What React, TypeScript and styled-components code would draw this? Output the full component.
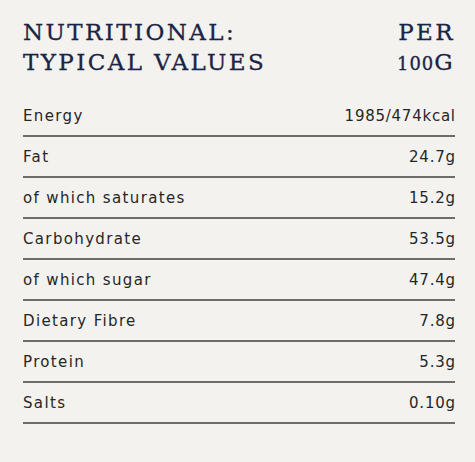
import React from 'react';
import styled, { createGlobalStyle } from 'styled-components';

const GlobalStyle = createGlobalStyle`
  html, body {
    margin: 0;
    padding: 0;
    background: #f4f2ee;
  }
`;

const rows: { label: string; value: string }[] = [
  { label: 'Energy', value: '1985/474kcal' },
  { label: 'Fat', value: '24.7g' },
  { label: 'of which saturates', value: '15.2g' },
  { label: 'Carbohydrate', value: '53.5g' },
  { label: 'of which sugar', value: '47.4g' },
  { label: 'Dietary Fibre', value: '7.8g' },
  { label: 'Protein', value: '5.3g' },
  { label: 'Salts', value: '0.10g' },
];

const App = () => {
  return (
    <>
      <GlobalStyle />
      <Panel>
        <Header>
          <Title>
            Nutritional:
            <br />
            Typical values
          </Title>
          <Per>
            Per
            <br />
            <OldStyle>100</OldStyle>G
          </Per>
        </Header>
        <Table>
          {rows.map((r) => (
            <Row key={r.label}>
              <Label>{r.label}</Label>
              <Value>{r.value}</Value>
            </Row>
          ))}
        </Table>
      </Panel>
    </>
  );
};

export default App;

const Panel = styled.div`
  width: 475px;
  height: 462px;
  box-sizing: border-box;
  padding: 17px 20px 0 23px;
  background: #f4f2ee;
`;

const Header = styled.div`
  display: flex;
  justify-content: space-between;
  align-items: flex-start;
  font-family: 'DejaVu Serif', 'Liberation Serif', serif;
  font-size: 23px;
  line-height: 30px;
  color: #1b2444;
  text-transform: uppercase;
  letter-spacing: 2.4px;
  -webkit-text-stroke: 0.3px #1b2444;
`;

const Title = styled.div``;

const Per = styled.div`
  text-align: right;
`;

const OldStyle = styled.span`
  text-transform: none;
  font-variant-numeric: oldstyle-nums;
  font-size: 0.78em;
  letter-spacing: 1px;
`;

const Table = styled.div`
  margin-top: 17px;
  display: flex;
  flex-direction: column;
`;

const Row = styled.div`
  display: flex;
  justify-content: space-between;
  align-items: center;
  height: 39px;
  border-bottom: 2px solid #6e6c68;
  font-family: 'DejaVu Sans', 'Lato', sans-serif;
  font-size: 15px;
  letter-spacing: 0.09em;
  color: #262626;
`;

const Label = styled.span``;

const Value = styled.span`
  letter-spacing: 0.05em;
  margin-right: -0.05em;
`;
